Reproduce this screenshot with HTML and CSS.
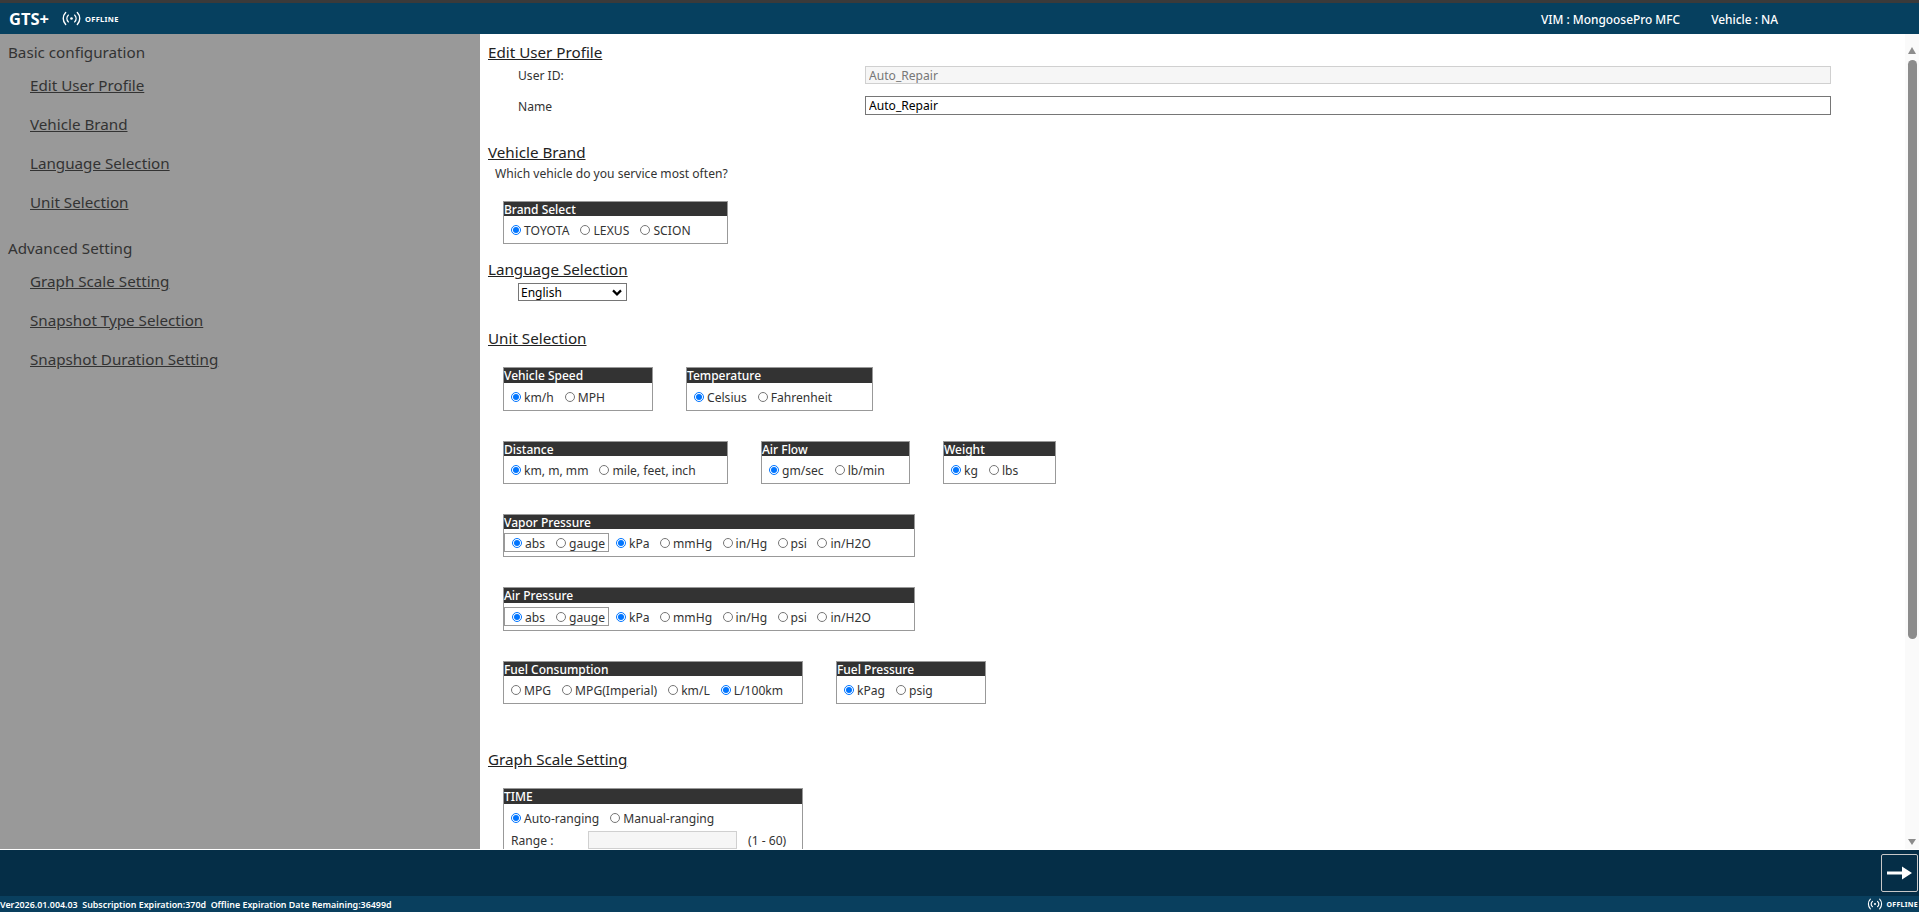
FILE: index.html
```html
<!DOCTYPE html>
<html lang="en">
<head>
<meta charset="utf-8">
<title>GTS+ Settings</title>
<link rel="stylesheet" href="styles.css">
</head>
<body>
<div class="app">
  <header class="topbar">
    <span class="logo">GTS+</span>
    <svg class="signal" viewBox="0 0 20 16" aria-hidden="true"><circle cx="10" cy="8" r="1.4"/><path d="M6.6 4.4a5.2 5.2 0 0 0 0 7.2M13.4 4.4a5.2 5.2 0 0 1 0 7.2M3.8 1.6a9.2 9.2 0 0 0 0 12.8M16.2 1.6a9.2 9.2 0 0 1 0 12.8"/></svg>
    <span class="offline">OFFLINE</span>
    <span class="status vim">VIM : MongoosePro MFC</span>
    <span class="status">Vehicle : NA</span>
  </header>

  <div class="middle">
    <nav class="sidebar">
      <h2 class="side-head">Basic configuration</h2>
      <a class="side-link">Edit User Profile</a>
      <a class="side-link">Vehicle Brand</a>
      <a class="side-link">Language Selection</a>
      <a class="side-link">Unit Selection</a>
      <h2 class="side-head adv">Advanced Setting</h2>
      <a class="side-link">Graph Scale Setting</a>
      <a class="side-link">Snapshot Type Selection</a>
      <a class="side-link">Snapshot Duration Setting</a>
    </nav>

    <main class="content">
      <h3 class="sec first">Edit User Profile</h3>
      <div class="field f-id"><label class="f-label">User ID:</label><input class="f-input ro" value="Auto_Repair" disabled></div>
      <div class="field f-name"><label class="f-label">Name</label><input class="f-input rw" value="Auto_Repair"></div>

      <h3 class="sec brand-h">Vehicle Brand</h3>
      <p class="question">Which vehicle do you service most often?</p>
      <section class="box w-brand brand-box">
        <div class="box-t">Brand Select</div>
        <div class="opts caps">
          <label class="o"><input type="radio" name="brand" checked>TOYOTA</label>
          <label class="o"><input type="radio" name="brand">LEXUS</label>
          <label class="o"><input type="radio" name="brand">SCION</label>
        </div>
      </section>

      <h3 class="sec lang-h">Language Selection</h3>
      <div class="lang-wrap">
        <select class="lang"><option>English</option></select>
        <svg class="chev" viewBox="0 0 10 7" aria-hidden="true"><path d="M1 1.4l4 4 4-4"/></svg>
      </div>

      <h3 class="sec unit-h">Unit Selection</h3>
      <div class="row r1">
        <section class="box w-speed">
          <div class="box-t tall">Vehicle Speed</div>
          <div class="opts"><label class="o"><input type="radio" name="sp" checked>km/h</label><label class="o"><input type="radio" name="sp">MPH</label></div>
        </section>
        <section class="box w-temp">
          <div class="box-t tall">Temperature</div>
          <div class="opts"><label class="o"><input type="radio" name="te" checked>Celsius</label><label class="o"><input type="radio" name="te">Fahrenheit</label></div>
        </section>
      </div>
      <div class="row r2">
        <section class="box w-dist">
          <div class="box-t">Distance</div>
          <div class="opts"><label class="o"><input type="radio" name="di" checked>km, m, mm</label><label class="o"><input type="radio" name="di">mile, feet, inch</label></div>
        </section>
        <section class="box w-air">
          <div class="box-t">Air Flow</div>
          <div class="opts"><label class="o"><input type="radio" name="af" checked>gm/sec</label><label class="o"><input type="radio" name="af">lb/min</label></div>
        </section>
        <section class="box w-weight">
          <div class="box-t">Weight</div>
          <div class="opts"><label class="o"><input type="radio" name="we" checked>kg</label><label class="o"><input type="radio" name="we">lbs</label></div>
        </section>
      </div>
      <div class="row r3">
        <section class="box w-press">
          <div class="box-t">Vapor Pressure</div>
          <div class="opts press">
            <div class="inner"><label class="o"><input type="radio" name="vg" checked>abs</label><label class="o"><input type="radio" name="vg">gauge</label></div>
            <label class="o"><input type="radio" name="vu" checked>kPa</label><label class="o"><input type="radio" name="vu">mmHg</label><label class="o"><input type="radio" name="vu">in/Hg</label><label class="o"><input type="radio" name="vu">psi</label><label class="o"><input type="radio" name="vu">in/H2O</label>
          </div>
        </section>
      </div>
      <div class="row r4">
        <section class="box w-press">
          <div class="box-t tall">Air Pressure</div>
          <div class="opts press">
            <div class="inner"><label class="o"><input type="radio" name="ag" checked>abs</label><label class="o"><input type="radio" name="ag">gauge</label></div>
            <label class="o"><input type="radio" name="au" checked>kPa</label><label class="o"><input type="radio" name="au">mmHg</label><label class="o"><input type="radio" name="au">in/Hg</label><label class="o"><input type="radio" name="au">psi</label><label class="o"><input type="radio" name="au">in/H2O</label>
          </div>
        </section>
      </div>
      <div class="row r5">
        <section class="box w-fuel">
          <div class="box-t">Fuel Consumption</div>
          <div class="opts"><label class="o"><input type="radio" name="fc">MPG</label><label class="o"><input type="radio" name="fc">MPG(Imperial)</label><label class="o"><input type="radio" name="fc">km/L</label><label class="o"><input type="radio" name="fc" checked>L/100km</label></div>
        </section>
        <section class="box w-fp">
          <div class="box-t">Fuel Pressure</div>
          <div class="opts"><label class="o"><input type="radio" name="fp" checked>kPag</label><label class="o"><input type="radio" name="fp">psig</label></div>
        </section>
      </div>

      <h3 class="sec graph-h">Graph Scale Setting</h3>
      <section class="box w-fuel time-box">
        <div class="box-t tall">TIME</div>
        <div class="opts time-opts"><label class="o"><input type="radio" name="tm" checked>Auto-ranging</label><label class="o"><input type="radio" name="tm">Manual-ranging</label></div>
        <div class="range"><span class="range-l">Range :</span><input class="range-i" disabled><span>(1 - 60)</span></div>
      </section>
    </main>

    <div class="rail">
      <span class="arrow up"></span>
      <div class="thumb"></div>
      <span class="arrow down"></span>
    </div>
  </div>

  <div class="actionbar">
    <button class="next" aria-label="Next">
      <svg viewBox="0 0 26 16" aria-hidden="true"><path d="M0 6.6h15V1.5L25 8l-10 6.5V9.4H0z"/></svg>
    </button>
  </div>

  <footer class="foot">
    <span class="foot-t">Ver2026.01.004.03&nbsp; Subscription Expiration:370d&nbsp; Offline Expiration Date Remaining:36499d</span>
    <svg class="signal small" viewBox="0 0 20 16" aria-hidden="true"><circle cx="10" cy="8" r="1.4"/><path d="M6.6 4.4a5.2 5.2 0 0 0 0 7.2M13.4 4.4a5.2 5.2 0 0 1 0 7.2M3.8 1.6a9.2 9.2 0 0 0 0 12.8M16.2 1.6a9.2 9.2 0 0 1 0 12.8"/></svg>
    <span class="offline small-o">OFFLINE</span>
  </footer>
</div>
</body>
</html>
```

FILE: styles.css
```css
* { box-sizing: border-box; }
html, body { margin: 0; height: 100%; overflow: hidden; }
body { font-family: "Noto Sans", "Liberation Sans", sans-serif; color: #333; background: #fff; }
.app { height: 912px; display: flex; flex-direction: column; }

.topbar { height: 34px; flex: none; background: #06405f; border-top: 3px solid #3a3a3a; display: flex; align-items: center; color: #fff; padding-left: 9px; }
.logo { font-size: 16.5px; font-weight: 700; line-height: 20px; width: 53px; }
.signal { width: 19px; height: 15px; fill: #fff; stroke: none; flex: none; }
.signal path { fill: none; stroke: #fff; stroke-width: 1.5; stroke-linecap: round; }
.offline { font-size: 7.5px; font-weight: 700; letter-spacing: .3px; margin-left: 4px; }
.status { font-size: 11.9px; font-weight: 500; margin-left: 31px; }
.vim { margin-left: auto; }
.topbar .status:last-child { margin-right: 141px; }

.middle { flex: 1; min-height: 0; display: flex; }
.sidebar { width: 480px; flex: none; background: #999; padding: 8px 0 0 8px; display: flex; flex-direction: column; align-items: flex-start; }
.side-head { margin: 0; font-size: 15.2px; font-weight: 400; line-height: 21px; color: #333; }
.side-head.adv { margin-top: 19px; }
.side-link { margin: 12px 0 6px 22px; font-size: 15.2px; line-height: 21px; text-decoration: underline; color: #333; }

.content { flex: 1; min-width: 0; overflow: hidden; padding-left: 8px; }
.sec { margin: 0; font-size: 15.2px; font-weight: 400; line-height: 20px; color: #222; text-decoration: underline; }
.first { margin-top: 8px; }
.field { display: flex; align-items: center; font-size: 12.1px; }
.f-id { margin-top: 4px; height: 18px; }
.f-name { margin-top: 12px; height: 19px; }
.f-label { width: 347px; margin-left: 30px; flex: none; }
.f-name .f-label { padding-top: 2px; }
.f-input { width: 966px; height: 100%; padding: 0 3px; font: 12.1px "Noto Sans", sans-serif; }
.ro { background: #f6f6f6; border: 1px solid #d0d0d0; color: #777; }
.rw { background: #fff; border: 1px solid #767676; color: #000; }
.brand-h { margin-top: 27px; }
.question { margin: 4px 0 0 7px; font-size: 12.1px; line-height: 16px; }

.box { border: 1px solid #999; background: #fff; flex: none; }
.box-t { background: #333; color: #fff; font-size: 12px; line-height: 16px; height: 14px; padding-left: 0; font-weight: 500; }
.box-t.tall { height: 15px; line-height: 15px; }
.opts { display: flex; align-items: center; height: 27px; padding: 2px 0 0 7px; gap: 11px; font-size: 12.1px; }
.caps { letter-spacing: .06px; }
.o { display: inline-flex; align-items: center; white-space: nowrap; line-height: 16px; }
.o input { width: 10px; height: 10px; margin: -1px 3px 0 0; flex: none; accent-color: #0075ff; }

.brand-box { margin: 19px 0 0 15px; }
.w-brand { width: 225px; }
.lang-h { margin-top: 15px; }
.lang-wrap { position: relative; width: 109px; margin: 4px 0 0 30px; }
.lang { display: block; width: 109px; height: 18px; font: 12px "Noto Sans", sans-serif; color: #000; background: #fff; border: 1px solid #767676; border-radius: 0; padding: 0 0 0 2px; appearance: none; }
.chev { position: absolute; right: 5px; top: 6px; width: 10px; height: 7px; fill: none; stroke: #000; stroke-width: 2.2; pointer-events: none; }
.unit-h { margin-top: 27px; }

.row { display: flex; gap: 33px; margin-left: 15px; margin-top: 30px; }
.r1 { margin-top: 19px; }
.w-speed { width: 150px; }
.w-temp { width: 187px; }
.w-dist { width: 225px; }
.w-air { width: 149px; }
.w-weight { width: 113px; }
.w-press { width: 412px; }
.w-fuel { width: 300px; }
.w-fp { width: 150px; }

.press { padding: 0; gap: 10.5px; }
.press .o { margin-top: 2px; }
.inner { display: flex; align-items: center; gap: 11px; width: 105px; height: 19px; border: 1px solid #999; padding-left: 7px; margin-right: -3.5px; }

.graph-h { margin-top: 45px; }
.time-box { margin: 19px 0 0 15px; }
.time-opts { height: 27px; }
.range { display: flex; align-items: center; padding-left: 7px; font-size: 12.1px; height: 18px; }
.range-l { width: 77px; flex: none; }
.range-i { width: 149px; height: 18px; background: #f6f6f6; border: 1px solid #d0d0d0; margin-right: 11px; }

.rail { width: 14px; flex: none; background: #fafafa; display: flex; flex-direction: column; align-items: center; padding-top: 13px; padding-bottom: 4px; }
.thumb { width: 9px; height: 579px; border-radius: 5px; background: #8c8c8c; margin-top: 6px; margin-bottom: auto; }
.arrow { width: 0; height: 0; border-left: 4.5px solid transparent; border-right: 4.5px solid transparent; }
.up { border-bottom: 7px solid #8c8c8c; }
.down { border-top: 6px solid #8c8c8c; }

.actionbar { height: 47px; flex: none; background: #052e47; display: flex; justify-content: flex-end; align-items: center; border-top: 1px solid #fff; }
.next { width: 37px; height: 38px; background: transparent; border: 1px solid #c8c8c8; border-radius: 2px; padding: 0; display: flex; align-items: center; justify-content: center; margin-right: 1px; }
.next svg { width: 26px; height: 16px; fill: #fff; }

.foot { height: 16px; flex: none; background: #093f5e; display: flex; align-items: center; color: #fff; }
.foot-t { font-size: 8.9px; font-weight: 600; white-space: nowrap; }
.signal.small { width: 16px; height: 12px; margin-left: auto; }
.small-o { font-size: 7px; margin: 0 1px 0 3px; }
```
